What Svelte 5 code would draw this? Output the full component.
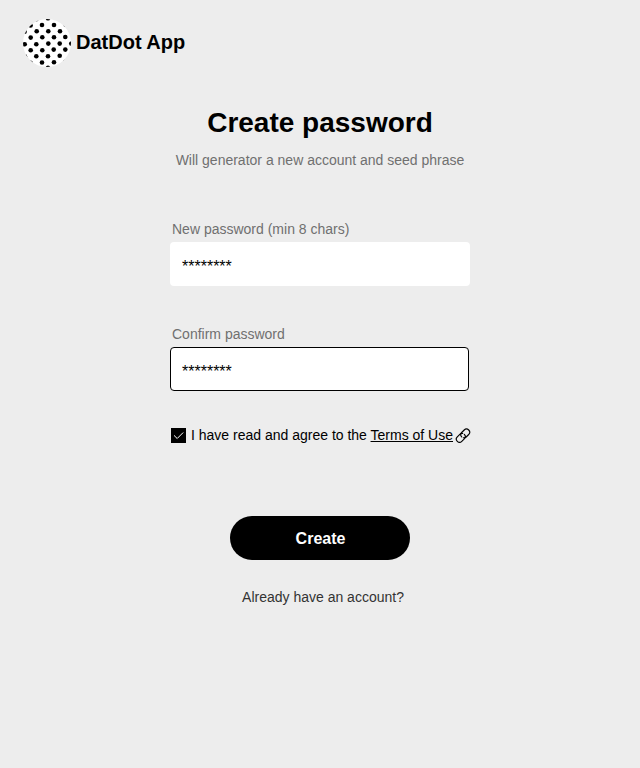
<script>
  const dots = [
    [19, 5.7], [31, 5.7], [13.7, 12], [25.3, 12], [37, 12],
    [7.7, 18.3], [19.3, 18], [31, 18], [42.3, 17.7],
    [1.7, 25], [13.3, 25], [25.3, 24.3], [36.7, 24.3], [48.3, 24.3],
    [7.7, 31], [19.3, 31], [30.7, 30.3], [42.3, 30.3],
    [13.3, 37], [25, 37], [36.7, 36.4], [19, 43.2], [31, 43],
    [25, 48.5], [25, -1], [13.3, -0.1], [7.6, 6.2], [42.7, 5.5],
    [1.6, 12.5], [48, 11.8], [2, 37.3], [48, 36.5], [7.5, 43.5], [42.5, 42.5]
  ];
  let password = $state('********');
  let confirmation = $state('********');
  let agreed = $state(true);
</script>

<div class="page">
  <header>
    <svg width="48" height="48" viewBox="0 0 48 48" aria-hidden="true">
      <defs><clipPath id="disc"><circle cx="24" cy="24" r="24" /></clipPath></defs>
      <circle cx="24" cy="24" r="24" fill="#fff" />
      <g clip-path="url(#disc)">
        {#each dots as [x, y]}<circle cx={x} cy={y + 0.3} r="2.3" />{/each}
      </g>
    </svg>
    <span class="brand">DatDot App</span>
  </header>
  <main>
    <h1>Create password</h1>
    <p class="subtitle">Will generator a new account and seed phrase</p>
    <form>
      <label class="field">
        <span>New password (min 8 chars)</span>
        <input type="text" bind:value={password} />
      </label>
      <label class="field active">
        <span>Confirm password</span>
        <input type="text" bind:value={confirmation} />
      </label>
      <div class="terms">
        <button type="button" class="check" aria-label="Agree" onclick={() => (agreed = !agreed)}>
          {#if agreed}
            <svg width="15" height="15" viewBox="0 0 15 15"><path d="M3 7.4 6.2 10.5 12.2 4.5" fill="none" stroke="#fff" stroke-width="1" /></svg>
          {/if}
        </button>
        <span class="agreement">I have read and agree to the <a href="#terms">Terms of Use</a></span>
        <svg class="link" width="16" height="16" viewBox="0 0 16 16" fill="none" stroke="#000" stroke-width="1.15" stroke-linecap="round" aria-hidden="true">
          <path d="M6.7 8.9A3.2 3.2 0 0 1 6.7 4.5L9.2 2A3.15 3.15 0 0 1 13.7 6.5L11.2 9A3.15 3.15 0 0 1 8.3 9.8" />
          <path d="M9.3 6.3A3.2 3.2 0 0 1 9.3 10.8L6.8 13.3A3.15 3.15 0 0 1 2.3 8.8L4.8 6.3A3.15 3.15 0 0 1 7.7 5.5" />
        </svg>
      </div>
      <button type="button" class="create">Create</button>
    </form>
    <a class="existing" href="#login">Already have an account?</a>
  </main>
</div>

<style>
  :global(body) { margin: 0; background: #ededed; }
  .page { box-sizing: border-box; height: 768px; padding-top: 19px; background: #ededed; color: #000; font-family: "Liberation Sans", Arial, sans-serif; font-size: 14px; }
  header { display: flex; height: 48px; padding-left: 23px; gap: 5px; }
  .brand { font-size: 20px; font-weight: 700; line-height: 46px; }
  main { display: flex; flex-direction: column; align-items: center; }
  h1 { margin: 40px 0 0; font-size: 28px; line-height: 32px; }
  .subtitle { margin: 13px 0 0; line-height: 16px; color: #707070; }
  form { display: flex; flex-direction: column; width: 300px; margin-top: 53px; }
  .field { display: flex; flex-direction: column; gap: 5px; margin-bottom: 40px; color: #707070; }
  .field span { padding-left: 2px; line-height: 16px; }
  input { box-sizing: border-box; width: 300px; height: 44px; padding: 6px 12px 0; border: 0; border-radius: 4px; outline: none; background: #fff; color: #000; font: 16px "Liberation Sans", Arial, sans-serif; }
  .active { margin-bottom: 37px; }
  .active input { width: 299px; padding: 5px 11px 0; border: 1px solid #000; }
  .terms { display: flex; align-items: center; height: 15px; padding-left: 1px; white-space: nowrap; }
  .agreement { line-height: 16px; padding-bottom: 1px; }
  .check { width: 15px; height: 15px; margin-right: 5px; padding: 0; border: 0; background: #000; }
  .check svg { display: block; }
  a { color: inherit; }
  .link { flex: none; margin-left: 2px; }
  .create { align-self: center; width: 180px; height: 44px; margin-top: 73px; padding: 2px 0 0 1px; border: 0; border-radius: 22px; background: #000; color: #fff; font: 700 16px "Liberation Sans", Arial, sans-serif; }
  .existing { margin: 29px 0 0 6px; color: #333; line-height: 16px; text-decoration: none; }
</style>
